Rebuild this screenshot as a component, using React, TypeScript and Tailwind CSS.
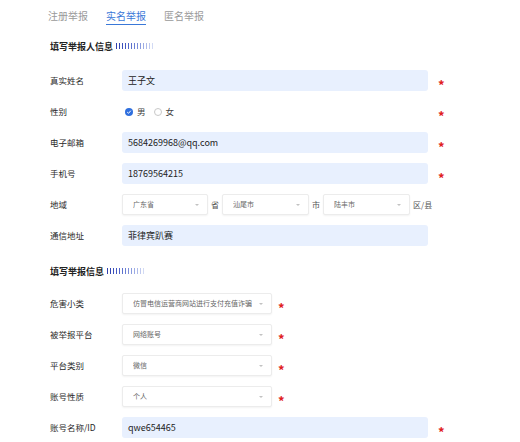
import React from 'react';

const font = { fontFamily: '"Noto Sans CJK SC", "Noto Sans", sans-serif' };

function Stripes() {
  // little fading bars after the section title
  const shades = [
    'bg-[#2f3fae]', 'bg-[#3446b4]', 'bg-[#3a4fbb]', 'bg-[#4459c2]', 'bg-[#5064c8]',
    'bg-[#5d71cd]', 'bg-[#6b7fd3]', 'bg-[#7b8dd9]', 'bg-[#8b9cdf]', 'bg-[#9cabe4]',
    'bg-[#aebbea]', 'bg-[#c0caef]', 'bg-[#d2daf4]',
  ];
  return (
    <span className="ml-[3px] inline-flex items-center gap-[2px]">
      {shades.map((c, i) => (
        <span key={i} className={`w-px h-[6px] ${c}`} />
      ))}
    </span>
  );
}

function Star() {
  return <span className="text-[#e02020] text-[13px] font-bold leading-none mt-[7px]">*</span>;
}

function Chevron() {
  return (
    <svg width="4" height="2" viewBox="0 0 4 2" className="shrink-0">
      <path d="M0 0 L4 0 L2 2 Z" fill="#c2c2c2" />
    </svg>
  );
}

function Select({ value, width }: { value: string; width: string }) {
  return (
    <div
      className={`${width} h-[21px] flex items-center justify-between pl-[10px] pr-[8px] bg-white border border-[#ececec] rounded-[2px] shadow-[0_1px_2px_rgba(0,0,0,0.05)]`}
    >
      <span className="text-[7px] text-[#666] truncate">{value}</span>
      <Chevron />
    </div>
  );
}

function Input({ value }: { value: string }) {
  return (
    <div className="w-[306px] h-[21px] flex items-center px-[6px] bg-[#e8f0fe] rounded-[3px] text-[9px] text-[#222]">
      {value}
    </div>
  );
}

function Row({ label, children }: { label: string; children: React.ReactNode }) {
  return (
    <div className="flex items-center h-[21px]">
      <div className="w-[72px] text-[8.5px] text-[#2a2a2a] shrink-0">{label}</div>
      {children}
    </div>
  );
}

function Title({ text }: { text: string }) {
  return (
    <div className="flex items-center h-[12px]">
      <span className="text-[9px] font-bold text-[#222] leading-none">{text}</span>
      <Stripes />
    </div>
  );
}

export default function App() {
  return (
    <div className="w-[520px] h-[442px] bg-white overflow-hidden" style={font}>
      {/* tabs */}
      <div className="flex gap-[18px] pl-[48px] pt-[9px] h-[26px] text-[10px] leading-[14px]">
        <span className="text-[#9a9a9a]">注册举报</span>
        <span className="text-[#3a78d8] border-b-[1.5px] border-[#3a78d8] h-[16px]">实名举报</span>
        <span className="text-[#9a9a9a]">匿名举报</span>
      </div>

      <div className="pl-[50px]">
        <div className="mt-[14px]">
          <Title text="填写举报人信息" />
        </div>

        <div className="mt-[18px] flex flex-col gap-[10px]">
          <Row label="真实姓名">
            <Input value="王子文" />
            <span className="ml-[10px] flex"><Star /></span>
          </Row>
          <Row label="性别">
            <div className="w-[306px] flex items-center pl-[3px] text-[8.5px] text-[#444]">
              <span className="w-[8px] h-[8px] rounded-full bg-[#2f6fde] flex items-center justify-center">
                <svg width="6" height="6" viewBox="0 0 6 6">
                  <path d="M1.2 3.1 L2.5 4.3 L4.8 1.7" stroke="#fff" strokeWidth="1" fill="none" />
                </svg>
              </span>
              <span className="ml-[4px]">男</span>
              <span className="ml-[8px] w-[8px] h-[8px] rounded-full border border-[#c8c8c8] bg-white" />
              <span className="ml-[4px]">女</span>
            </div>
            <span className="ml-[10px] flex"><Star /></span>
          </Row>
          <Row label="电子邮箱">
            <Input value="5684269968@qq.com" />
            <span className="ml-[10px] flex"><Star /></span>
          </Row>
          <Row label="手机号">
            <Input value="18769564215" />
            <span className="ml-[10px] flex"><Star /></span>
          </Row>
          <Row label="地域">
            <Select value="广东省" width="w-[86px]" />
            <span className="w-[14px] text-center text-[8px] text-[#555]">省</span>
            <Select value="汕尾市" width="w-[87px]" />
            <span className="w-[14px] text-center text-[8px] text-[#555]">市</span>
            <Select value="陆丰市" width="w-[87px]" />
            <span className="ml-[3px] text-[8px] text-[#555]">区/县</span>
          </Row>
          <Row label="通信地址">
            <Input value="菲律宾趴赛" />
          </Row>
        </div>

        <div className="mt-[19px]">
          <Title text="填写举报信息" />
        </div>

        <div className="mt-[16px] flex flex-col gap-[10px]">
          <Row label="危害小类">
            <Select value="仿冒电信运营商网站进行支付充值诈骗" width="w-[150px]" />
            <span className="ml-[6px] flex"><Star /></span>
          </Row>
          <Row label="被举报平台">
            <Select value="网络账号" width="w-[150px]" />
            <span className="ml-[6px] flex"><Star /></span>
          </Row>
          <Row label="平台类别">
            <Select value="微信" width="w-[150px]" />
            <span className="ml-[6px] flex"><Star /></span>
          </Row>
          <Row label="账号性质">
            <Select value="个人" width="w-[150px]" />
            <span className="ml-[6px] flex"><Star /></span>
          </Row>
          <Row label="账号名称/ID">
            <Input value="qwe654465" />
            <span className="ml-[10px] flex"><Star /></span>
          </Row>
        </div>
      </div>
    </div>
  );
}
